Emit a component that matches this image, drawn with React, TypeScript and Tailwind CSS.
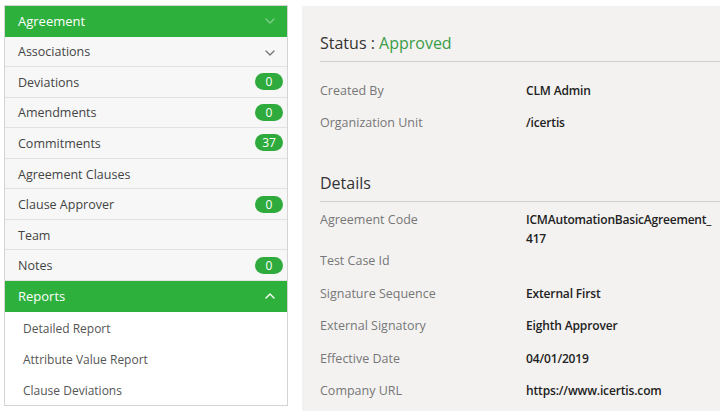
import React from 'react';

const font = { fontFamily: '"Open Sans", "Liberation Sans", sans-serif' };

const Chevron = ({ up = false, className = '' }: { up?: boolean; className?: string }) => (
    <svg width="10" height="6" viewBox="0 0 10 6" className={className} fill="none">
        <path
            d={up ? 'M1 5 L5 1 L9 5' : 'M1 1 L5 5 L9 1'}
            stroke="currentColor"
            strokeWidth="1.4"
            strokeLinecap="round"
            strokeLinejoin="round"
        />
    </svg>
);

const Badge = ({ value }: { value: number }) => (
    <span className="min-w-[28px] h-[17px] px-[7px] rounded-full bg-[#2eab3c] text-white text-[12px] leading-[17px] text-center">
        {value}
    </span>
);

const App: React.FC = () => {
    const menu: { label: string; badge?: number; chevron?: boolean }[] = [
        { label: 'Associations', chevron: true },
        { label: 'Deviations', badge: 0 },
        { label: 'Amendments', badge: 0 },
        { label: 'Commitments', badge: 37 },
        { label: 'Agreement Clauses' },
        { label: 'Clause Approver', badge: 0 },
        { label: 'Team' },
        { label: 'Notes', badge: 0 },
    ];

    const reports = ['Detailed Report', 'Attribute Value Report', 'Clause Deviations'];

    const details = [
        { label: 'Signature Sequence', value: 'External First' },
        { label: 'External Signatory', value: 'Eighth Approver' },
        { label: 'Effective Date', value: '04/01/2019' },
        { label: 'Company URL', value: 'https://www.icertis.com' },
    ];

    return (
        <div className="w-[720px] h-[411px] overflow-hidden bg-white flex pl-[4px] pt-[5px]" style={font}>
            {/* left navigation */}
            <div className="w-[284px] h-[401px] border border-[#d4d4d4] flex flex-col shrink-0">
                <div className="h-[30.5px] shrink-0 bg-[#2eb03c] flex items-center justify-between pl-[13px] pr-[12px] text-white text-[13px]">
                    <span className="pt-[1px]">Agreement</span>
                    <Chevron className="text-[#80cd88]" />
                </div>
                {menu.map((item) => (
                    <div
                        key={item.label}
                        className="h-[30.56px] shrink-0 bg-[#f7f7f7] border-b border-[#e2e2e2] flex items-center justify-between pl-[13px] pr-[4px] text-[12.5px] text-[#444]"
                    >
                        <span className="pt-[3px]">{item.label}</span>
                        {item.badge !== undefined && <Badge value={item.badge} />}
                        {item.chevron && <Chevron className="text-[#777] mr-[8px] mt-[3px]" />}
                    </div>
                ))}
                <div className="h-[31px] shrink-0 bg-[#2eb03c] flex items-center justify-between pl-[13px] pr-[12px] text-white text-[13px]">
                    <span>Reports</span>
                    <Chevron up className="text-white" />
                </div>
                <div className="flex-1 bg-white flex flex-col">
                    {reports.map((r) => (
                        <div key={r} className="h-[31px] shrink-0 flex items-center pl-[18px] pt-[4px] text-[12px] text-[#555]">
                            {r}
                        </div>
                    ))}
                </div>
            </div>

            {/* right details */}
            <div className="flex-1 ml-[14px] mt-[1px] bg-[#f3f2f1] pl-[18px] text-[12.5px]">
                <div className="pt-[25px] pb-[6px] border-b border-[#cfcfcf] text-[16px] leading-[24px] text-[#333]">
                    Status : <span className="text-[#3a9d46]">Approved</span>
                </div>

                <div className="mt-[18.5px]">
                    <div className="h-[32px] flex leading-[19px]">
                        <span className="w-[206px] text-[#777]">Created By</span>
                        <span className="font-semibold text-[12px] tracking-[-0.15px] text-[#222]">CLM Admin</span>
                    </div>
                    <div className="h-[32px] flex leading-[19px]">
                        <span className="w-[206px] text-[#777]">Organization Unit</span>
                        <span className="font-semibold text-[12px] tracking-[-0.15px] text-[#222]">/icertis</span>
                    </div>
                </div>

                <div className="mt-[26.5px] pb-[6px] border-b border-[#cfcfcf] text-[16px] leading-[24px] text-[#333]">
                    Details
                </div>

                <div className="mt-[8px]">
                    <div className="h-[41px] flex leading-[19px]">
                        <span className="w-[206px] shrink-0 text-[#777]">Agreement Code</span>
                        <span className="font-semibold text-[12px] tracking-[-0.2px] text-[#222] whitespace-nowrap">
                            ICMAutomationBasicAgreement_
                            <br />
                            417
                        </span>
                    </div>
                    <div className="h-[32.5px] flex leading-[19px]">
                        <span className="w-[206px] shrink-0 text-[#777]">Test Case Id</span>
                    </div>
                    {details.map((d) => (
                        <div key={d.label} className="h-[32.5px] flex leading-[19px]">
                            <span className="w-[206px] shrink-0 text-[#777]">{d.label}</span>
                            <span className="font-semibold text-[12px] tracking-[-0.15px] text-[#222] whitespace-nowrap">
                                {d.value}
                            </span>
                        </div>
                    ))}
                </div>
            </div>
        </div>
    );
};

export default App;
